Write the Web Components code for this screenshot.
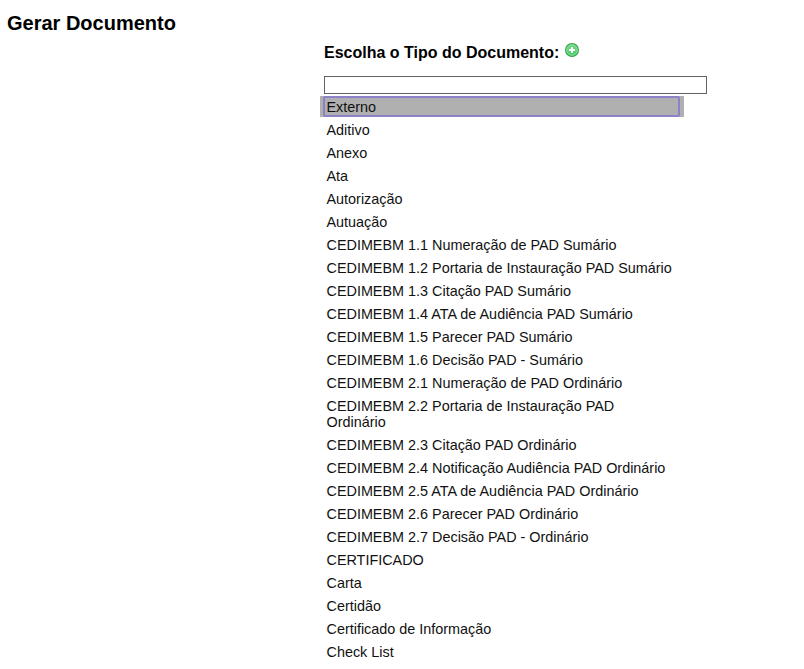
<!DOCTYPE html>
<html lang="pt-BR">
<head>
<meta charset="utf-8">
<title>Gerar Documento</title>
<style>
html,body{margin:0;background:#fff;height:669px;overflow:hidden}
body{font-family:"Liberation Sans",Arial,sans-serif;color:#000}
</style>
</head>
<body>
<document-page heading="Gerar Documento">
  <type-label slot="label">Escolha o Tipo do Documento:</type-label>
  <filter-field slot="filter"></filter-field>
  <type-list slot="list"></type-list>
</document-page>
<script>
class DocumentPage extends HTMLElement {
  constructor() {
    super();
    this.attachShadow({mode: 'open'}).innerHTML = `
      <style>
        :host{display:block;height:669px;overflow:hidden}
        h1{margin:0;padding:11px 0 0 7px;font-size:20px;line-height:24px;height:24px;white-space:nowrap}
        main{display:flex;flex-direction:column;align-items:flex-start;padding:7px 0 0 320px}
      </style>
      <h1></h1>
      <main><slot name="label"></slot><slot name="filter"></slot><slot name="list"></slot></main>`;
    this.shadowRoot.querySelector('h1').textContent = this.getAttribute('heading');
  }
}
class AddIcon extends HTMLElement {
  constructor() {
    super();
    this.attachShadow({mode: 'open'}).innerHTML = `
      <style>:host{display:block;width:16px;height:16px}svg{display:block}</style>
      <svg width="16" height="16" viewBox="0 0 16 16">
        <defs><linearGradient id="g" x2="0" y2="1"><stop offset="0" stop-color="#7fd78c"/><stop offset="1" stop-color="#3fd062"/></linearGradient></defs>
        <circle cx="8" cy="8" r="6.4" fill="url(#g)" stroke="#36a34b" stroke-width="1.2"/>
        <circle cx="8" cy="8" r="5.3" fill="none" stroke="#8fe0a0" stroke-width=".9"/>
        <path d="M7 5h2v2h2v2H9v2H7V9H5V7h2z" fill="#fff"/>
      </svg>`;
  }
}
class TypeLabel extends HTMLElement {
  constructor() {
    super();
    this.attachShadow({mode: 'open'}).innerHTML = `
      <style>
        :host{display:flex;gap:5px;height:20px;margin-left:4px;font-weight:bold;font-size:16px;line-height:22px;white-space:nowrap}
      </style>
      <span><slot></slot></span><add-icon></add-icon>`;
  }
}
class FilterField extends HTMLElement {
  constructor() {
    super();
    this.attachShadow({mode: 'open'}).innerHTML = `
      <style>
        :host{display:block;margin:14px 0 2px 4px}
        input{display:block;box-sizing:border-box;width:383px;height:18px;padding:0 2px;border:1px solid #626262;border-radius:0;background:#fff;outline:0;font:14px "Liberation Sans",sans-serif}
      </style>
      <input type="text" aria-label="Tipo do Documento">`;
  }
}
class TypeOption extends HTMLElement {
  constructor() {
    super();
    this.attachShadow({mode: 'open'}).innerHTML = `
      <style>
        :host{display:block;box-sizing:border-box;width:364px;padding:0 4px 0 3px;color:#111}
        :host([selected]){background:#afb0af}
        a{display:block;box-sizing:border-box;padding:1px 6px 0 1.5px;border:2px solid transparent;border-radius:2px;font-size:14.4px;line-height:16px}
        :host([selected]) a{border-color:#8d82c9}
      </style>
      <a><slot></slot></a>`;
  }
}
class TypeList extends HTMLElement {
  constructor() {
    super();
    this.attachShadow({mode: 'open'}).innerHTML = `
      <style>:host{display:flex;flex-direction:column;gap:2px}</style>`;
    const names = ['Externo','Aditivo','Anexo','Ata','Autorização','Autuação',
      'CEDIMEBM 1.1 Numeração de PAD Sumário','CEDIMEBM 1.2 Portaria de Instauração PAD Sumário',
      'CEDIMEBM 1.3 Citação PAD Sumário','CEDIMEBM 1.4 ATA de Audiência PAD Sumário',
      'CEDIMEBM 1.5 Parecer PAD Sumário','CEDIMEBM 1.6 Decisão PAD - Sumário',
      'CEDIMEBM 2.1 Numeração de PAD Ordinário','CEDIMEBM 2.2 Portaria de Instauração PAD Ordinário',
      'CEDIMEBM 2.3 Citação PAD Ordinário','CEDIMEBM 2.4 Notificação Audiência PAD Ordinário',
      'CEDIMEBM 2.5 ATA de Audiência PAD Ordinário','CEDIMEBM 2.6 Parecer PAD Ordinário',
      'CEDIMEBM 2.7 Decisão PAD - Ordinário','CERTIFICADO','Carta','Certidão',
      'Certificado de Informação','Check List'];
    names.forEach((name, i) => {
      const option = document.createElement('type-option');
      option.textContent = name;
      if (i === 0) option.setAttribute('selected', '');
      this.shadowRoot.append(option);
    });
  }
}
customElements.define('add-icon', AddIcon);
customElements.define('type-option', TypeOption);
customElements.define('type-list', TypeList);
customElements.define('type-label', TypeLabel);
customElements.define('filter-field', FilterField);
customElements.define('document-page', DocumentPage);
</script>
</body>
</html>
